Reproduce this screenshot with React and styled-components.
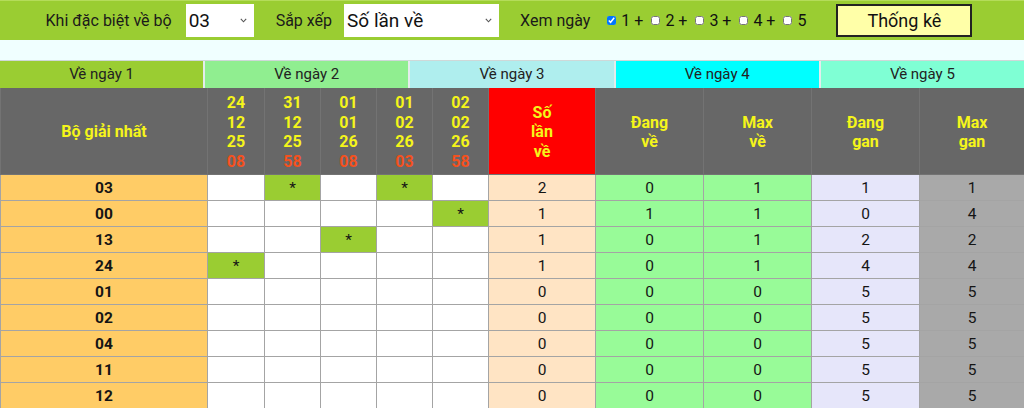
import React from "react";
import styled, { createGlobalStyle } from "styled-components";

const GlobalStyle = createGlobalStyle`
  body {
    margin: 0;
    background: #f0ffff;
    font-family: Roboto, "Liberation Sans", Arial, sans-serif;
    color: #111;
  }
`;

const TopBar = styled.form`
  height: 40px;
  background: #9acd32;
  border-top: 1px solid #b4dc5a;
  box-sizing: border-box;
  display: flex;
  align-items: center;
  justify-content: center;
  font-size: 16px;
  padding-right: 6px;
`;

const Label = styled.span`
  margin: 0 ${(p) => p.$gap || 0}px 0 ${(p) => p.$left || 0}px;
  color: #1a1a1a;
`;

const SelectWrap = styled.div`
  position: relative;
  display: flex;
`;

const Select = styled.select`
  width: ${(p) => p.$w}px;
  height: 33px;
  border: none;
  background: #fff;
  appearance: none;
  font-family: Roboto, "Liberation Sans", Arial, sans-serif;
  font-size: 19px;
  padding: 0 0 0 3px;
  color: #111;
  outline: none;
`;

const Chevron = styled.svg`
  position: absolute;
  right: 7px;
  top: 14px;
  width: 7px;
  height: 5px;
  pointer-events: none;
`;

const Checks = styled.div`
  display: flex;
  align-items: center;
  font-size: 16px;
  margin-left: 13px;
  margin-right: 30px;
`;

const Check = styled.label`
  display: flex;
  align-items: center;
  white-space: pre;

  input {
    width: 9px;
    height: 9px;
    margin: 0 5px 0 4px;
  }
`;

const Button = styled.button`
  width: 136px;
  height: 33px;
  background: #ffffa8;
  border: 2px solid #222;
  font-family: Roboto, "Liberation Sans", Arial, sans-serif;
  font-size: 18px;
  color: #111;
  padding: 0;
`;

const Spacer = styled.div`
  height: 20px;
`;

const Tabs = styled.div`
  display: grid;
  grid-template-columns: repeat(5, 1fr);
  gap: 2px;
  background: #e4ecec;
  border-top: 1px solid #cfd8d8;
`;

const Tab = styled.div`
  height: 27px;
  line-height: 27px;
  text-align: center;
  font-size: 15px;
  color: #222;
  background: ${(p) => p.$bg};
`;

const Table = styled.table`
  width: 1024px;
  border-collapse: collapse;
  table-layout: fixed;
  font-size: 15.5px;
`;

const Th = styled.th`
  background: ${(p) => p.$bg || "#676767"};
  color: #f5f51a;
  font-weight: 700;
  font-size: 16px;
  line-height: 19.5px;
  height: 84px;
  padding: 2px 0 0;
  border: 1px solid #737373;
  border-top: none;
`;

const Red = styled.span`
  color: #f4511e;
`;

const Td = styled.td`
  background: ${(p) => p.$bg || "#fff"};
  height: 25px;
  padding: 0;
  text-align: center;
  border: 1px solid #a4a4a4;
  font-weight: ${(p) => (p.$bold ? 700 : 400)};
  color: #151515;
`;

const dates = [
  ["24", "12", "25", "08"],
  ["31", "12", "25", "58"],
  ["01", "01", "26", "08"],
  ["01", "02", "26", "03"],
  ["02", "02", "26", "58"],
];

const rows = [
  { bo: "03", hits: [1, 3], so: 2, dv: 0, mv: 1, dg: 1, mg: 1 },
  { bo: "00", hits: [4], so: 1, dv: 1, mv: 1, dg: 0, mg: 4 },
  { bo: "13", hits: [2], so: 1, dv: 0, mv: 1, dg: 2, mg: 2 },
  { bo: "24", hits: [0], so: 1, dv: 0, mv: 1, dg: 4, mg: 4 },
  { bo: "01", hits: [], so: 0, dv: 0, mv: 0, dg: 5, mg: 5 },
  { bo: "02", hits: [], so: 0, dv: 0, mv: 0, dg: 5, mg: 5 },
  { bo: "04", hits: [], so: 0, dv: 0, mv: 0, dg: 5, mg: 5 },
  { bo: "11", hits: [], so: 0, dv: 0, mv: 0, dg: 5, mg: 5 },
  { bo: "12", hits: [], so: 0, dv: 0, mv: 0, dg: 5, mg: 5 },
];

const tabs = [
  ["Về ngày 1", "#9acd32"],
  ["Về ngày 2", "#90ee90"],
  ["Về ngày 3", "#afeeee"],
  ["Về ngày 4", "#00ffff"],
  ["Về ngày 5", "#7fffd4"],
];

const widths = [207, 57, 56, 56, 56, 56, 107, 108, 108, 108, 105];

function Dropdown({ width, value, options }) {
  return (
    <SelectWrap>
      <Select $w={width} defaultValue={value}>
        {options.map((o) => (
          <option key={o}>{o}</option>
        ))}
      </Select>
      <Chevron viewBox="0 0 7 5">
        <path d="M0.8 0.8 L3.5 3.8 L6.2 0.8" fill="none" stroke="#555" strokeWidth="1.1" />
      </Chevron>
    </SelectWrap>
  );
}

export default function App() {
  return (
    <>
      <GlobalStyle />
      <TopBar onSubmit={(e) => e.preventDefault()}>
        <Label $gap={14}>Khi đặc biệt về bộ</Label>
        <Dropdown width={68} value="03" options={["03", "00", "13"]} />
        <Label $left={22} $gap={12}>Sắp xếp</Label>
        <Dropdown width={155} value="Số lần về" options={["Số lần về", "Đang về", "Max gan"]} />
        <Label $left={21}>Xem ngày</Label>
        <Checks>
          <Check><input type="checkbox" defaultChecked />1 + </Check>
          <Check><input type="checkbox" />2 + </Check>
          <Check><input type="checkbox" />3 + </Check>
          <Check><input type="checkbox" />4 + </Check>
          <Check><input type="checkbox" />5</Check>
        </Checks>
        <Button type="submit">Thống kê</Button>
      </TopBar>
      <Spacer />
      <Tabs>
        {tabs.map(([t, bg]) => (
          <Tab key={t} $bg={bg}>{t}</Tab>
        ))}
      </Tabs>
      <Table>
        <colgroup>
          {widths.map((w, i) => (
            <col key={i} style={{ width: w }} />
          ))}
        </colgroup>
        <thead>
          <tr>
            <Th>Bộ giải nhất</Th>
            {dates.map((d, i) => (
              <Th key={i}>
                {d[0]}<br />{d[1]}<br />{d[2]}<br /><Red>{d[3]}</Red>
              </Th>
            ))}
            <Th $bg="#ff0000">Số<br />lần<br />về</Th>
            <Th>Đang<br />về</Th>
            <Th>Max<br />về</Th>
            <Th>Đang<br />gan</Th>
            <Th>Max<br />gan</Th>
          </tr>
        </thead>
        <tbody>
          {rows.map((r) => (
            <tr key={r.bo}>
              <Td $bg="#ffcc66" $bold>{r.bo}</Td>
              {dates.map((_, i) => {
                const hit = r.hits.includes(i);
                return (
                  <Td key={i} $bg={hit ? "#9acd32" : "#fff"}>
                    {hit ? "*" : ""}
                  </Td>
                );
              })}
              <Td $bg="#ffe4c4">{r.so}</Td>
              <Td $bg="#98fb98">{r.dv}</Td>
              <Td $bg="#98fb98">{r.mv}</Td>
              <Td $bg="#e6e6fa">{r.dg}</Td>
              <Td $bg="#a9a9a9">{r.mg}</Td>
            </tr>
          ))}
        </tbody>
      </Table>
    </>
  );
}
